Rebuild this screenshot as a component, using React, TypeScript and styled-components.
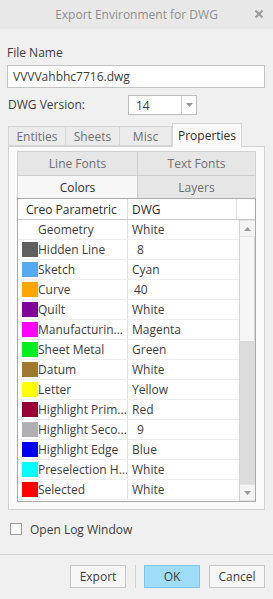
import styled, { createGlobalStyle } from 'styled-components';

const GlobalStyle = createGlobalStyle`
  html, body {
    margin: 0;
    padding: 0;
    background: #f0f0f0;
  }
  body {
    font-family: "Open Sans", "Noto Sans", sans-serif;
    font-size: 11.5px;
    color: #3c3c3c;
  }
`;

const Dialog = styled.div`
  width: 273px;
  height: 599px;
  display: flex;
  flex-direction: column;
  background: #f0f0f0;
  box-sizing: border-box;
  overflow: hidden;
`;

const TitleBar = styled.div`
  height: 29px;
  flex: none;
  background: #e8e8e8;
  display: flex;
  align-items: center;
  justify-content: center;
  position: relative;
  color: #8f8f8f;
  font-size: 12px;
`;

const CloseButton = styled.span`
  position: absolute;
  right: 9px;
  top: 9px;
  width: 10px;
  height: 10px;
  display: flex;
  align-items: center;
  justify-content: center;
`;

const Body = styled.div`
  padding: 16px 8px 0 7px;
  display: flex;
  flex-direction: column;
`;

const Label = styled.div`
  line-height: 16px;
  height: 16px;
  font-size: 12px;
`;

const TextInput = styled.div`
  margin-top: 4px;
  height: 23px;
  box-sizing: border-box;
  border: 1px solid #c4c4c4;
  background: #ffffff;
  padding: 0 5px;
  display: flex;
  align-items: center;
  font-size: 12px;
`;

const VersionRow = styled.div`
  margin-top: 7px;
  height: 20px;
  display: flex;
  align-items: center;
  justify-content: space-between;
  padding-right: 68px;
  padding-left: 1px;
`;

const Select = styled.div`
  width: 69px;
  height: 20px;
  box-sizing: border-box;
  border: 1px solid #bdbdbd;
  background: #fff;
  display: flex;
  align-items: stretch;
`;

const SelectValue = styled.div`
  flex: 1;
  display: flex;
  align-items: center;
  padding-left: 7px;
  font-size: 12px;
`;

const SelectArrow = styled.div`
  width: 14px;
  border-left: 1px solid #c8c8c8;
  display: flex;
  align-items: center;
  justify-content: center;
`;

const TabStrip = styled.div`
  margin-top: 8px;
  margin-left: 1px;
  height: 23px;
  display: flex;
  align-items: flex-end;
`;

const Tab = styled.div<{ $w: number; $active?: boolean }>`
  width: ${p => p.$w}px;
  height: ${p => (p.$active ? 24 : 20)}px;
  box-sizing: border-box;
  display: flex;
  align-items: center;
  justify-content: center;
  border: 1px solid #d6d6d6;
  border-left: ${p => (p.$active ? '1px solid #d6d6d6' : 'none')};
  border-bottom: ${p => (p.$active ? 'none' : '1px solid #d6d6d6')};
  background: ${p => (p.$active ? '#fafafa' : '#ebebeb')};
  color: ${p => (p.$active ? '#2e2e2e' : '#707070')};
  margin-bottom: ${p => (p.$active ? '-1px' : '0')};
  position: relative;
  font-size: 12px;
  &:first-child {
    border-left: 1px solid #d6d6d6;
  }
`;

const TabPanel = styled.div`
  margin-left: 1px;
  height: 364px;
  box-sizing: border-box;
  border: 1px solid #d2d2d2;
  background: #fafafa;
  padding: 4px 8px 0 8px;
  display: flex;
  flex-direction: column;
`;

const SubTabs = styled.div`
  display: grid;
  grid-template-columns: 120px 119px;
  grid-template-rows: 24px 23px;
`;

const SubTab = styled.div<{ $active?: boolean }>`
  box-sizing: border-box;
  display: flex;
  align-items: center;
  justify-content: center;
  background: ${p => (p.$active ? '#f7f7f7' : '#e6e6e6')};
  border-left: 1px solid #d0d0d0;
  border-top: 1px solid #d0d0d0;
  &:nth-child(2n) {
    border-right: 1px solid #d0d0d0;
  }
  color: ${p => (p.$active ? '#2e2e2e' : '#707070')};
  font-size: 12px;
`;

const Table = styled.div`
  height: 304px;
  box-sizing: border-box;
  border: 1px solid #a9a9a9;
  background: #ffffff;
  display: grid;
  grid-template-columns: 1fr 16px;
  grid-template-rows: 21px 1fr;
  overflow: hidden;
`;

const HeaderRow = styled.div`
  grid-column: 1 / 3;
  display: grid;
  grid-template-columns: 110px 109px 1fr;
  border-bottom: 1px solid #c9c9c9;
`;

const HeaderCell = styled.div<{ $pad: number }>`
  display: flex;
  align-items: center;
  padding-left: ${p => p.$pad}px;
  border-right: 1px solid #dddddd;
  color: #2a2a2a;
  font-size: 12px;
  &:last-child {
    border-right: none;
  }
`;

const Rows = styled.div`
  display: flex;
  flex-direction: column;
`;

const Row = styled.div`
  height: 20px;
  flex: none;
  display: grid;
  grid-template-columns: 110px 1fr;
  border-bottom: 1px solid #eeeeee;
  box-sizing: border-box;
`;

const NameCell = styled.div`
  display: flex;
  align-items: center;
  padding-left: 4px;
  border-right: 1px solid #e2e2e2;
  white-space: nowrap;
  overflow: hidden;
  font-size: 12px;
`;

const Swatch = styled.span<{ $color: string }>`
  width: 16px;
  height: 15px;
  flex: none;
  background: ${p => p.$color};
`;

const ValueCell = styled.div<{ $indent: number }>`
  display: flex;
  align-items: center;
  padding-left: ${p => 4 + p.$indent}px;
  font-size: 12px;
`;

const ScrollBar = styled.div`
  display: flex;
  flex-direction: column;
  border-left: 1px solid #d4d4d4;
  background: #dcdcdc;
`;

const ScrollButton = styled.div`
  height: 15px;
  flex: none;
  background: #f4f4f4;
  display: flex;
  align-items: center;
  justify-content: center;
  border-top: 1px solid #e4e4e4;
  border-bottom: 1px solid #e4e4e4;
`;

const ScrollThumb = styled.div`
  height: 104px;
  flex: none;
  background: #f6f6f6;
  border-right: 1px solid #d4d4d4;
`;

const ScrollTrack = styled.div`
  flex: 1;
`;

const CheckRow = styled.div`
  margin-top: 12px;
  margin-left: 3px;
  display: flex;
  align-items: center;
  gap: 8px;
  height: 14px;
  font-size: 12px;
`;

const CheckBox = styled.span`
  width: 12px;
  height: 12px;
  box-sizing: border-box;
  border: 1px solid #9a9a9a;
  background: #fff;
`;

const Separator = styled.div`
  margin-top: 18px;
  height: 1px;
  background: #d0d0d0;
  flex: none;
`;

const ButtonBar = styled.div`
  display: flex;
  justify-content: flex-end;
  align-items: center;
  padding: 10px 8px 0 0;
  gap: 9px;
`;

const Button = styled.div<{ $primary?: boolean }>`
  width: 56px;
  height: 23px;
  box-sizing: border-box;
  display: flex;
  align-items: center;
  justify-content: center;
  border: 1px solid ${p => (p.$primary ? '#7cc6ea' : '#c6c6c6')};
  background: ${p => (p.$primary ? '#9fdcf7' : '#f7f7f7')};
  font-size: 12px;
`;

const ButtonDivider = styled.div`
  width: 1px;
  height: 23px;
  background: #d0d0d0;
  margin-right: -1px;
`;

const Arrow = ({ up }: { up?: boolean }) => (
  <svg width="7" height="4" viewBox="0 0 7 4">
    <polygon points={up ? '0,4 7,4 3.5,0' : '0,0 7,0 3.5,4'} fill="#9a9a9a" />
  </svg>
);

type Entry = { name: string; color: string; value: string; indent?: number };

const entries: Entry[] = [
  { name: 'Geometry', color: '#ffffff', value: 'White' },
  { name: 'Hidden Line', color: '#5f5f5f', value: '8', indent: 5 },
  { name: 'Sketch', color: '#55aaf5', value: 'Cyan' },
  { name: 'Curve', color: '#ffa500', value: '40', indent: 2 },
  { name: 'Quilt', color: '#800099', value: 'White' },
  { name: 'Manufacturin...', color: '#ff00ff', value: 'Magenta' },
  { name: 'Sheet Metal', color: '#00ee22', value: 'Green' },
  { name: 'Datum', color: '#a07830', value: 'White' },
  { name: 'Letter', color: '#ffff00', value: 'Yellow' },
  { name: 'Highlight Prim...', color: '#990033', value: 'Red' },
  { name: 'Highlight Seco...', color: '#b0b0b4', value: '9', indent: 5 },
  { name: 'Highlight Edge', color: '#0000f0', value: 'Blue' },
  { name: 'Preselection H...', color: '#00ffff', value: 'White' },
  { name: 'Selected', color: '#ff0000', value: 'White' },
];

const App = () => (
  <>
    <GlobalStyle />
    <Dialog>
      <TitleBar>
        Export Environment for DWG
        <CloseButton>
          <svg width="10" height="10" viewBox="0 0 10 10">
            <path d="M1.5 1.5 L8.5 8.5 M8.5 1.5 L1.5 8.5" stroke="#9a9a9a" strokeWidth="2" />
          </svg>
        </CloseButton>
      </TitleBar>
      <Body>
        <Label>File Name</Label>
        <TextInput>VVVVahbhc7716.dwg</TextInput>
        <VersionRow>
          <Label>DWG Version:</Label>
          <Select>
            <SelectValue>14</SelectValue>
            <SelectArrow><Arrow /></SelectArrow>
          </Select>
        </VersionRow>
        <TabStrip>
          <Tab $w={58}>Entities</Tab>
          <Tab $w={54}>Sheets</Tab>
          <Tab $w={52}>Misc</Tab>
          <Tab $w={70} $active>Properties</Tab>
        </TabStrip>
        <TabPanel>
          <SubTabs>
            <SubTab>Line Fonts</SubTab>
            <SubTab>Text Fonts</SubTab>
            <SubTab $active>Colors</SubTab>
            <SubTab>Layers</SubTab>
          </SubTabs>
          <Table>
            <HeaderRow>
              <HeaderCell $pad={8}>Creo Parametric</HeaderCell>
              <HeaderCell $pad={4}>DWG</HeaderCell>
              <HeaderCell $pad={0} />
            </HeaderRow>
            <Rows>
              {entries.map(e => (
                <Row key={e.name}>
                  <NameCell>
                    <Swatch $color={e.color} />
                    {e.name}
                  </NameCell>
                  <ValueCell $indent={e.indent ?? 0}>{e.value}</ValueCell>
                </Row>
              ))}
            </Rows>
            <ScrollBar>
              <ScrollButton><Arrow up /></ScrollButton>
              <ScrollThumb />
              <ScrollTrack />
              <ScrollButton><Arrow /></ScrollButton>
            </ScrollBar>
          </Table>
        </TabPanel>
        <CheckRow>
          <CheckBox />
          Open Log Window
        </CheckRow>
      </Body>
      <Separator />
      <ButtonBar>
        <Button>Export</Button>
        <ButtonDivider />
        <Button $primary>OK</Button>
        <Button>Cancel</Button>
      </ButtonBar>
    </Dialog>
  </>
);

export default App;
